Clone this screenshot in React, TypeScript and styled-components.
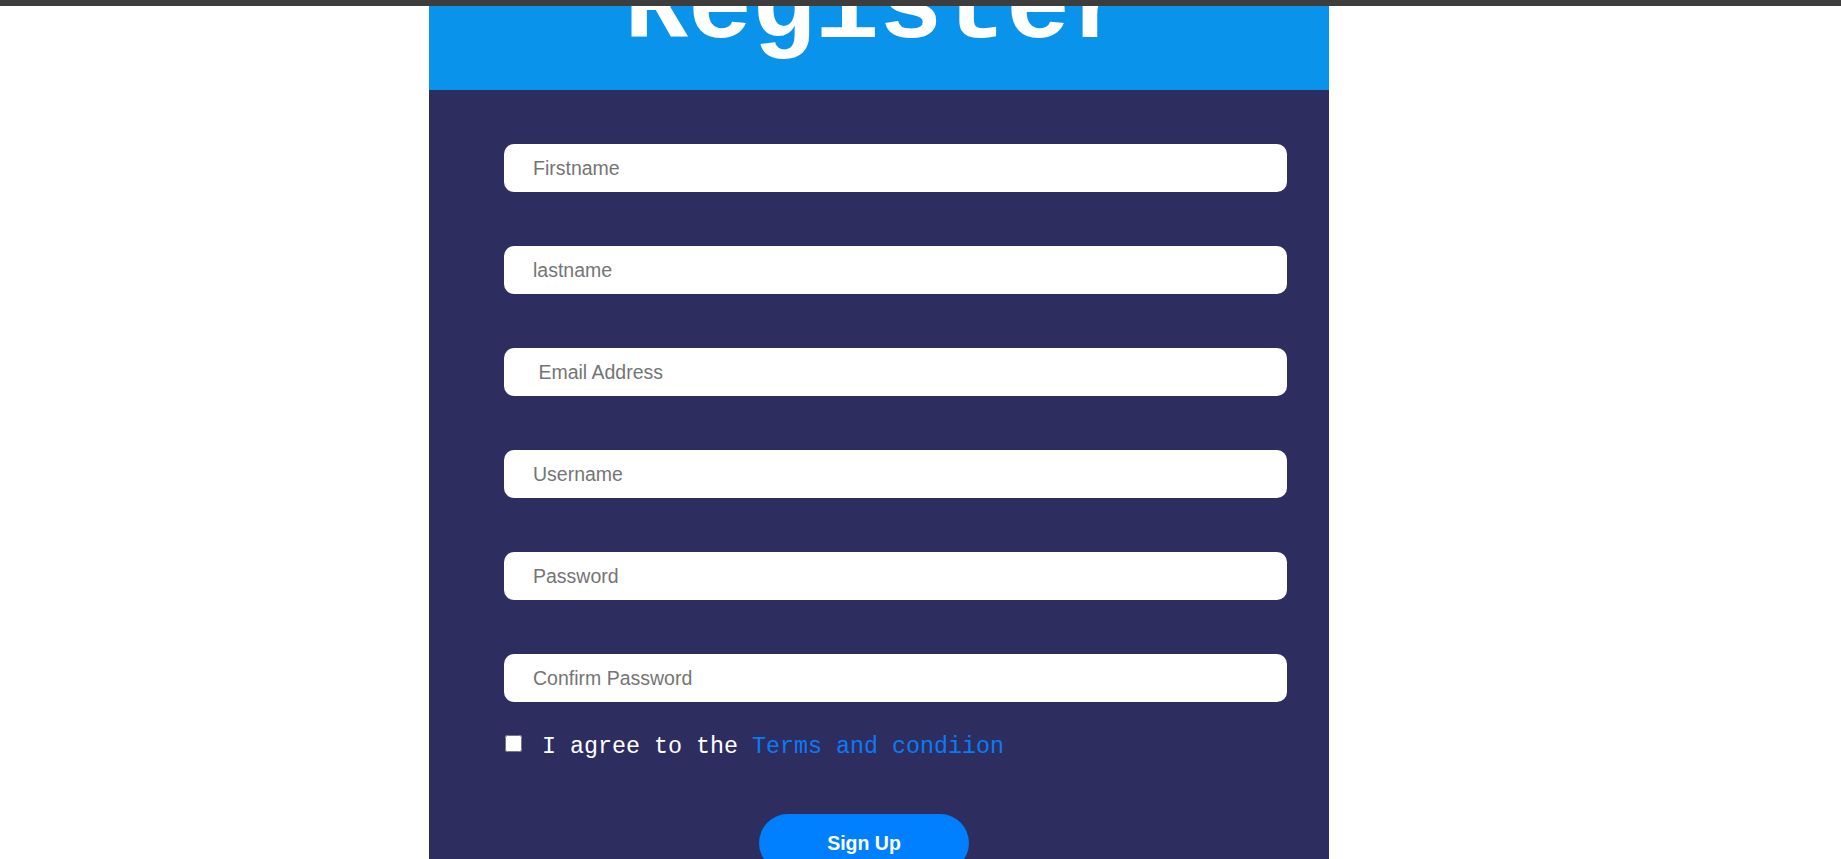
import React from "react";
import styled, { createGlobalStyle } from "styled-components";

const GlobalStyle = createGlobalStyle`
  html, body {
    margin: 0;
    padding: 0;
    background: #ffffff;
  }
  body {
    font-family: "Liberation Sans", Arial, sans-serif;
    overflow: hidden;
  }
`;

const TopBar = styled.div`
  height: 6px;
  background: #3d3d3d;
`;

const Panel = styled.main`
  width: 900px;
  margin-left: 429px;
  min-height: 853px;
  background: #2e2d60;
  display: flex;
  flex-direction: column;
`;

const Header = styled.header`
  height: 84px;
  background: #0a93eb;
  overflow: hidden;
  text-align: center;
`;

const Title = styled.h1`
  margin: -50px 0 0 0;
  font-family: "Liberation Mono", "Courier New", monospace;
  font-weight: bold;
  font-size: 106px;
  line-height: 106px;
  color: #ffffff;
`;

const Form = styled.form`
  display: flex;
  flex-direction: column;
  padding: 54px 0 0 75px;
`;

const Field = styled.input`
  box-sizing: border-box;
  width: 783px;
  height: 48px;
  margin: 0 0 54px 0;
  padding: 0 29px;
  border: none;
  border-radius: 10px;
  background: #ffffff;
  font-family: "Liberation Sans", Arial, sans-serif;
  font-size: 19.5px;
  color: #333;
  outline: none;

  &:last-of-type {
    margin-bottom: 0;
  }

  &::placeholder {
    color: #757575;
    white-space: pre;
  }
`;

const AgreeRow = styled.label`
  display: flex;
  align-items: flex-start;
  margin-top: 32px;
  font-family: "Liberation Mono", "Courier New", monospace;
  font-size: 23.33px;
  color: #ffffff;
`;

const Check = styled.input`
  width: 17px;
  height: 17px;
  margin: 1px 20px 0 1px;
  flex: none;
`;

const TermsLink = styled.a`
  color: #0a7bf5;
  text-decoration: none;
`;

const SignUp = styled.button`
  width: 210px;
  height: 58px;
  margin: 54px 0 0 255px;
  border: none;
  border-radius: 30px;
  background: #0080ff;
  color: #ffffff;
  font-family: "Liberation Sans", Arial, sans-serif;
  font-weight: bold;
  font-size: 19.5px;
  cursor: pointer;
`;

const fields = [
  { type: "text", placeholder: "Firstname" },
  { type: "text", placeholder: "lastname" },
  { type: "email", placeholder: " Email Address" },
  { type: "text", placeholder: "Username" },
  { type: "password", placeholder: "Password" },
  { type: "password", placeholder: "Confirm Password" },
];

export default function App() {
  return (
    <>
      <GlobalStyle />
      <TopBar />
      <Panel>
        <Header>
          <Title>Register</Title>
        </Header>
        <Form onSubmit={(e) => e.preventDefault()}>
          {fields.map((f) => (
            <Field key={f.placeholder} type={f.type} placeholder={f.placeholder} />
          ))}
          <AgreeRow>
            <Check type="checkbox" />
            <span>
              I agree to the <TermsLink href="#">Terms and condiion</TermsLink>
            </span>
          </AgreeRow>
          <div>
            <SignUp type="submit">Sign Up</SignUp>
          </div>
        </Form>
      </Panel>
    </>
  );
}
